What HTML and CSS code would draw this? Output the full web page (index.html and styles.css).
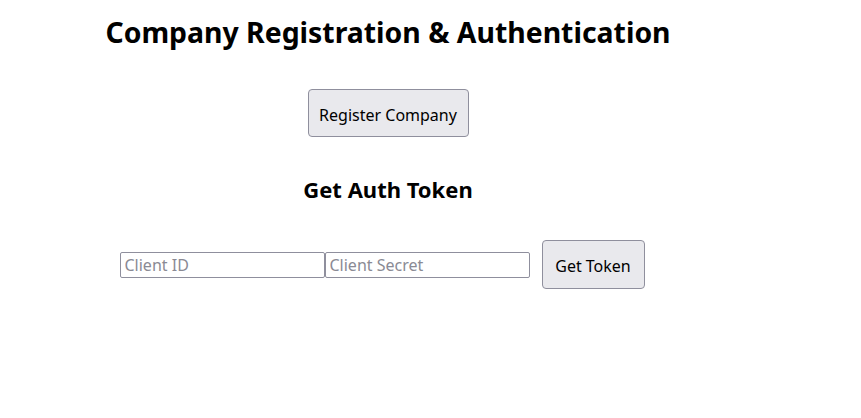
FILE: index.html
```html
<!DOCTYPE html>
<html>
<head>
<meta charset="utf-8">
<link rel="stylesheet" href="styles.css">
</head>
<body>
<div class="app">
  <h1 class="title">Company Registration &amp; Authentication</h1>
  <button class="btn btn-register">Register Company</button>
  <h2 class="subtitle">Get Auth Token</h2>
  <div class="token-row">
    <input class="field" type="text" placeholder="Client ID">
    <input class="field" type="text" placeholder="Client Secret">
    <button class="btn btn-token">Get Token</button>
  </div>
</div>
</body>
</html>
```
FILE: styles.css
```css
body {
  margin: 8px;
  font-family: "Noto Sans", sans-serif;
  background: #fff;
  color: #000;
}
.app {
  width: 760px;
  display: flex;
  flex-direction: column;
  align-items: center;
}
.title {
  font-size: 28.4px;
  font-weight: 700;
  margin: 4px 0 0;
  line-height: 40px;
}
.btn {
  font-family: "Noto Sans", sans-serif;
  font-size: 16px;
  background: #e9e9ed;
  border: 1px solid #8f8f9d;
  border-radius: 4px;
  color: #000;
  padding: 3px 0 0;
}
.btn-register {
  margin-top: 37px;
  width: 161px;
  height: 48px;
}
.subtitle {
  font-size: 22px;
  font-weight: 700;
  margin: 38px 0 0;
  line-height: 28px;
}
.token-row {
  display: flex;
  align-items: center;
  margin-top: 37px;
}
.field {
  box-sizing: border-box;
  width: 205px;
  height: 26px;
  border: 1px solid #8f8f9d;
  border-radius: 2px;
  padding: 0 4px;
  font-family: "Noto Sans", sans-serif;
  font-size: 16px;
  margin: 0;
}
.field::placeholder {
  color: #8a8a94;
}
.btn-token {
  margin: 0 12px;
  width: 103px;
  height: 49px;
}
```
